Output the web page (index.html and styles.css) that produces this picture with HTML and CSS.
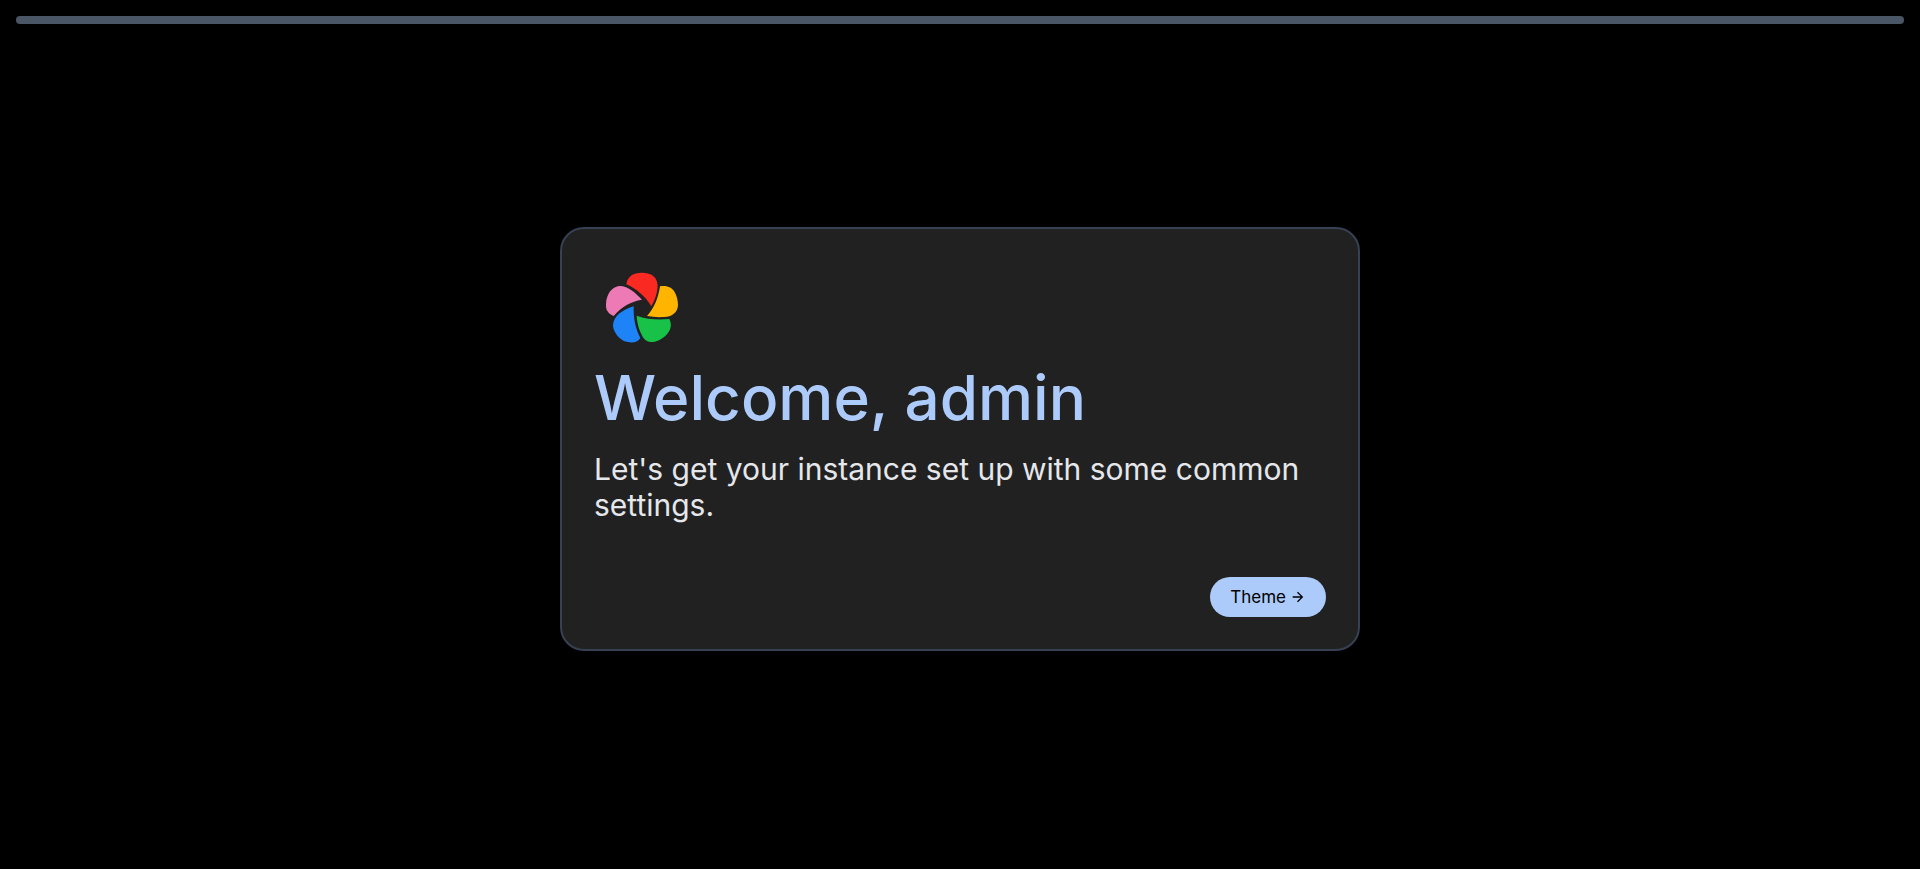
FILE: index.html
```html
<!DOCTYPE html>
<html lang="en">
<head>
    <meta charset="UTF-8">
    <meta name="viewport" content="width=device-width, initial-scale=1.0">
    <title>Onboarding</title>
    <link rel="stylesheet" href="styles.css">
</head>
<body>

    <!-- Setup progress -->
    <div class="progress"></div>

    <main class="onboarding">
        <section class="card">
            <svg class="logo" viewBox="12 3 288 288" aria-hidden="true">
                <path fill="#fa2921" d="M109 73C112 49 130 38 155 38C187 38 203 54 203 78C202 100 195 120 184 139C165 108 140 87 109 73Z"/>
                <path fill="#ffb400" d="M210 79C232 75 246 84 252 93C260 106 264 120 264 136C263 158 245 171 222 171C205 172 187 171 171 168C192 145 205 115 210 79Z"/>
                <path fill="#18c249" d="M140 167C170 178 205 180 238 177C247 195 243 212 225 229C207 243 195 247 182 246C170 244 163 239 158 230C147 210 141 190 140 167Z"/>
                <path fill="#1e83f7" d="M131 139C130 175 136 206 151 234C143 249 122 250 103 244C83 234 69 212 69 196C71 167 96 151 131 139Z"/>
                <path fill="#ed79b5" d="M156 119C123 124 95 140 71 168C54 160 47 151 48 132C49 104 64 81 87 78C115 77 137 100 156 119Z"/>
            </svg>
            <h1>Welcome, admin</h1>
            <p>Let's get your instance set up with some common settings.</p>
            <div class="actions">
                <button type="button">
                    <span>Theme</span>
                    <svg class="arrow" viewBox="0 0 24 24" aria-hidden="true">
                        <path d="M4,11V13H16L10.5,18.5L11.92,19.92L19.84,12L11.92,4.08L10.5,5.5L16,11H4Z"/>
                    </svg>
                </button>
            </div>
        </section>
    </main>

</body>
</html>
```

FILE: styles.css
```css
* {
    box-sizing: border-box;
}

body {
    margin: 0;
    min-height: 100vh;
    display: flex;
    flex-direction: column;
    padding: 16px 16px 8px;
    background-color: #000;
    color: #e5e7eb;
    font-family: Inter, sans-serif;
}

.progress {
    height: 8px;
    border-radius: 4px;
    background-color: #4a5565;
}

.onboarding {
    flex: 1;
    display: flex;
    align-items: center;
    justify-content: center;
    padding-bottom: 8px;
}

.card {
    width: 100%;
    max-width: 800px;
    padding: 32px;
    border: 2px solid #364153;
    border-radius: 24px;
    background-color: #212121;
}

.logo {
    display: block;
    width: 96px;
    height: 96px;
}

h1 {
    margin: 8px 0 20px;
    color: #accbfa;
    font-size: 62px;
    font-weight: 500;
    line-height: 66px;
}

p {
    margin: 0;
    font-size: 30px;
    line-height: 36px;
}

.actions {
    display: flex;
    justify-content: flex-end;
    margin-top: 54px;
}

button {
    display: flex;
    align-items: center;
    gap: 4px;
    height: 40px;
    padding: 0 20px;
    border: none;
    border-radius: 20px;
    background-color: #accbfa;
    color: #000;
    font-family: Inter, sans-serif;
    font-size: 17px;
    font-weight: 400;
    cursor: pointer;
}

.arrow {
    width: 16px;
    height: 16px;
    fill: #000;
}
```
